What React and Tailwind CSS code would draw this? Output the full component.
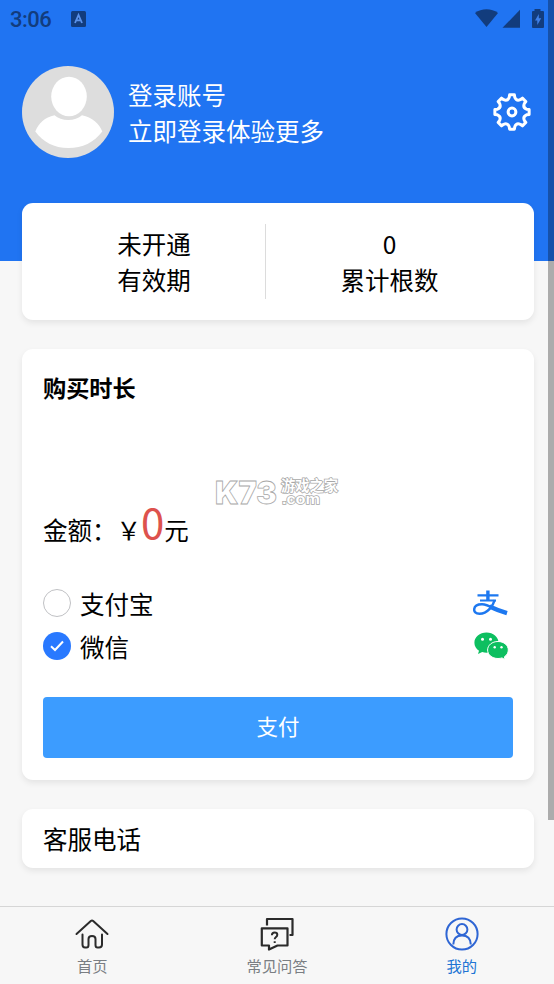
import React from "react";

const GEAR_TEETH = 8;

function polar(radius, degrees) {
  const rad = ((degrees - 90) * Math.PI) / 180;
  return `${(20 + radius * Math.cos(rad)).toFixed(2)} ${(20 + radius * Math.sin(rad)).toFixed(2)}`;
}

function gearPath() {
  const step = 360 / GEAR_TEETH;
  let d = "";
  for (let i = 0; i < GEAR_TEETH; i++) {
    const a = i * step;
    d += `${i === 0 ? "M" : "L"}${polar(17.3, a - 8)} L${polar(17.3, a + 8)} L${polar(14.8, a + 11)} `;
    d += `Q${polar(11.6, a + step / 2)} ${polar(14.8, a + step - 11)} `;
  }
  return `${d}Z`;
}

function GearIcon() {
  return (
    <svg className="h-10 w-10" viewBox="0 0 40 40" fill="none" stroke="#fff" strokeWidth="3" strokeLinejoin="round">
      <path d={gearPath()} />
      <circle cx="20" cy="20" r="3.900" />
    </svg>
  );
}

function Avatar() {
  return (
    <svg className="h-[92px] w-[92px] shrink-0" viewBox="0 0 92 92">
      <circle cx="46" cy="46" r="46" fill="#ddd" />
      <path d="M32.5 49.3 C39 55.6 53.5 55.6 60 49.3 C70 51.2 77.5 58 80.3 65.5 C72 76.5 60.500 82 46.500 82 C32 82 21 76 13.300 65.500 C16.500 57.500 23 51.200 32.500 49.300Z" fill="#fff" />
      <ellipse cx="47" cy="30.500" rx="17.800" ry="19.800" fill="#fff" />
    </svg>
  );
}

function StatusBar() {
  return (
    <div className="flex h-[38px] items-center justify-between pl-[10px] pr-[9px] text-[#123c7d]">
      <div className="flex items-center gap-5">
        <span className="mt-px font-['Roboto',sans-serif] text-[22px] font-medium leading-none tracking-[-0.5px]">3:06</span>
        <svg className="h-4 w-[15px]" viewBox="0 0 15 16">
          <rect width="15" height="16" rx="1.500" fill="#123c7d" />
          <path d="M4 12 7.500 4 11 12M5.300 9.400H9.700" fill="none" stroke="#5b92ea" strokeWidth="1.800" />
        </svg>
      </div>
      <svg className="h-5 w-[70px]" viewBox="0 0 70 20" fill="#123c7d">
        <path d="M0 4C6.500-1 16.500-1 23 4L11.500 18Z" />
        <path d="M45 .8V18.800H27.500Z" />
        <path d="M59.500 0H65.500V2H68Q69 2 69 3V18Q69 19 68 19H58Q57 19 57 18V3Q57 2 58 2H59.500Z" />
        <path d="M63.800 5 60 11.500H62.300V16L66.200 9.300H63.800Z" fill="#3f80e8" />
      </svg>
    </div>
  );
}

function AlipayIcon() {
  return (
    <svg className="h-[26px] w-[36px]" viewBox="0 0 36 26" fill="none" stroke="#1d78f0">
      <path d="M4.500 5.300H25.500M7 10.500H23" strokeWidth="2.200" />
      <path d="M14.900 .5V10.500" strokeWidth="3.400" />
      <path d="M21.700 10C20 16 14.500 23.700 6.500 23.700C2.500 23.700 1 21.700 1.200 19.200C1.500 15.800 5 14.300 9 14.300C14.500 14.300 18 17.200 23 19.800" strokeWidth="2.500" />
      <path d="M16.500 16.500Q25 20.500 34 23.200" strokeWidth="4.400" />
    </svg>
  );
}

function WechatIcon() {
  return (
    <svg className="h-[28px] w-[35px]" viewBox="0 0 35 28">
      <path d="M12.500 .5C5.700 .5 .4 5 .4 10.700C.4 14 2.200 16.800 5 18.700L4 22L8.200 20C9.600 20.400 11 20.700 12.500 20.700C19.200 20.700 24.500 16.200 24.500 10.600C24.500 5 19.200 .5 12.500 .5Z" fill="#0dbf60" />
      <path d="M24 9.500C18.100 9.500 13.600 13.200 13.600 18C13.600 22.800 18.100 26.500 24 26.500C25.500 26.500 26.800 26.300 28 25.900L31 27.600L30.400 24.800C32.900 23.200 34.300 20.800 34.300 18C34.300 13.200 29.800 9.500 24 9.500Z" fill="#0dbf60" stroke="#fff" strokeWidth="1" />
      <g fill="#fff">
        <circle cx="8.500" cy="7.200" r="1.500" />
        <circle cx="16.500" cy="7.200" r="1.500" />
        <circle cx="20.700" cy="15.300" r="1.200" />
        <circle cx="27.500" cy="15.300" r="1.200" />
      </g>
    </svg>
  );
}

function Radio({ checked }) {
  if (!checked) return <span className="h-7 w-7 rounded-full border-[1.5px] border-[#c0c1c4]" />;
  return (
    <span className="flex h-7 w-7 items-center justify-center rounded-full bg-[#2979ff]">
      <svg className="h-3 w-[14px]" viewBox="0 0 14 12" fill="none" stroke="#fff" strokeWidth="2">
        <path d="M1 6.300 5 10 13 1.500" />
      </svg>
    </span>
  );
}

function PayOption({ label, checked, icon }) {
  return (
    <div className="flex h-[43px] items-center pr-1">
      <Radio checked={checked} />
      <span className="ml-[9px] mt-0.5 flex-1">{label}</span>
      {icon}
    </div>
  );
}

function HomeIcon() {
  return (
    <svg className="h-[34px] w-[34px]" viewBox="0 0 34 34" fill="none" stroke="#2b2b2b" strokeWidth="2" strokeLinecap="round" strokeLinejoin="round">
      <path d="M1.500 17 15.800 4Q17 3 18.200 4L32.500 17" />
      <path d="M7.500 17.500V27.500Q7.500 30.500 10 30.500H11.500Q13.500 30.500 13.500 28V22Q13.500 19 17 19Q20.500 19 20.500 22V28Q20.500 30.500 22.500 30.500H24Q27 30.500 27 27.500V17.500" />
    </svg>
  );
}

function FaqIcon() {
  return (
    <svg className="h-[34px] w-[34px]" viewBox="0 0 34 34" fill="none" stroke="#2b2b2b" strokeWidth="2.200" strokeLinejoin="round">
      <path d="M7 8.500V2H32.500V18H29.500" />
      <path d="M1.800 11.300H27.500V28.500H17.500L9 32.500V28.500H1.800Z" />
      <path d="M11.900 18.200Q12 15.500 14.600 15.500Q17.300 15.500 17.300 17.700Q17.300 19 16 20Q14.700 21 14.700 22.300M14.700 24.200V26" strokeWidth="2" />
    </svg>
  );
}

function MineIcon() {
  return (
    <svg className="h-[34px] w-[34px]" viewBox="0 0 34 34" fill="none" stroke="#2f66d4" strokeWidth="2">
      <circle cx="17" cy="17" r="15.600" />
      <circle cx="17" cy="12.500" r="5.400" />
      <path d="M8.300 27.500Q8.500 18.500 17 18.500Q25.500 18.500 25.800 27.500" />
    </svg>
  );
}

function Tab({ icon, label, active }) {
  return (
    <div className="flex flex-1 flex-col items-center pt-[10px]">
      {icon}
      <span className={`mt-[3px] text-[15.300px] leading-[22px] ${active ? "text-[#2074d4]" : "text-[#7a7e83]"}`}>{label}</span>
    </div>
  );
}

function Watermark() {
  return (
    <svg className="absolute left-[192px] top-[121px] h-[44px] w-[128px] overflow-visible" viewBox="0 -6 128 44" fill="#fff" stroke="#a8a8a8" fontWeight="700">
      <text x="1" y="28" fontSize="31.500" fontWeight="900" textLength="62" lengthAdjust="spacingAndGlyphs" strokeWidth="0.800" fontFamily="Inter, sans-serif">K73</text>
      <g paintOrder="stroke" strokeWidth="1.500">
        <text x="67" y="15" fontSize="14.300" textLength="57" lengthAdjust="spacingAndGlyphs" fontFamily="Noto Sans CJK SC, sans-serif">游戏之家</text>
        <text x="68" y="28" fontSize="15" textLength="38" lengthAdjust="spacingAndGlyphs" fontFamily="Liberation Sans, sans-serif">.com</text>
      </g>
    </svg>
  );
}

const CARD = "rounded-[11px] bg-white shadow-[0_3px_6px_rgba(0,0,0,0.08)]";

export default function App() {
  return (
    <div className="relative flex h-[984px] w-[554px] flex-col overflow-hidden bg-[#f7f7f7] font-['Noto_Sans_CJK_SC',sans-serif] text-[24.500px] leading-[36.500px] text-black">
      <header className="h-[261px] shrink-0 bg-[#2074f2]">
        <StatusBar />
        <div className="mt-7 flex items-center pl-[22px] pr-[22px]">
          <Avatar />
          <div className="ml-[14px] flex-1 pt-0.5 text-white">
            <div>登录账号</div>
            <div>立即登录体验更多</div>
          </div>
          <GearIcon />
        </div>
      </header>

      <main className="-mt-[58px] flex flex-1 flex-col gap-[29px] pl-[22px] pr-5">
        <section className={`flex h-[117px] px-[21px] py-[21px] text-center ${CARD}`}>
          <div className="w-[223px] border-r border-[#dcdcdc] pt-[1.5px]">
            <div>未开通</div>
            <div>有效期</div>
          </div>
          <div className="flex-1 pt-[1.5px]">
            <div>0</div>
            <div>累计根数</div>
          </div>
        </section>

        <section className={`relative flex h-[431px] flex-col px-[21px] pb-[22px] pt-5 ${CARD}`}>
          <h2 className="text-[23.200px] font-bold">购买时长</h2>
          <div className="mt-[83px] flex h-[66px] items-baseline leading-[66px]">
            <span>金额：￥</span>
            <span className="relative -top-px text-[42px] text-[#dd524d]">0</span>
            <span>元</span>
          </div>
          <div className="mt-[27px]">
            <PayOption label="支付宝" icon={<AlipayIcon />} />
            <PayOption label="微信" checked icon={<WechatIcon />} />
          </div>
          <button className="mt-auto h-[61px] w-full rounded-[4px] bg-[#3c9cff] pb-0.5 text-[21.500px] text-white">支付</button>
          <Watermark />
        </section>

        <section className={`flex h-[59px] items-center px-[21px] pt-px ${CARD}`}>客服电话</section>
      </main>

      <nav className="flex h-[78px] shrink-0 border-t border-[#d6d6d6]">
        <Tab icon={<HomeIcon />} label="首页" />
        <Tab icon={<FaqIcon />} label="常见问答" />
        <Tab icon={<MineIcon />} label="我的" active />
      </nav>

      <div className="absolute right-0 top-0 h-[820px] w-1.5 bg-black/30" />
    </div>
  );
}
